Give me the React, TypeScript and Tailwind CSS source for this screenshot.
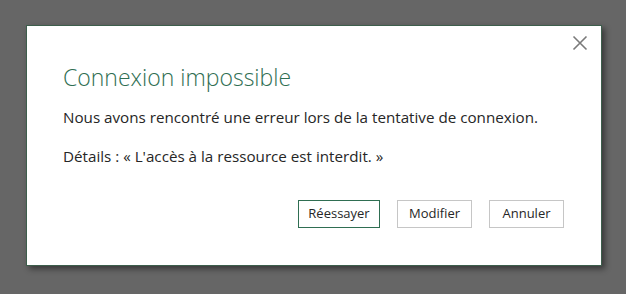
export default function App() {
    return (
        <div className="w-[626px] h-[294px] bg-[#666666] pt-[25px] pl-[26px] font-['Open_Sans',sans-serif]">
            <div className="relative w-[576px] h-[241px] bg-white border border-[#3d5e4c] shadow-[3px_3px_6px_rgba(0,0,0,0.45)] pl-[36px] pt-[36px]">
                <button className="absolute right-[12px] top-[8px] w-[18px] h-[18px] flex items-center justify-center text-[#7a7a7a]">
                    <svg width="16" height="16" viewBox="0 0 16 16" fill="none" stroke="currentColor" strokeWidth="1.6">
                        <path d="M1.5 1.5 L14.5 14.5 M14.5 1.5 L1.5 14.5" />
                    </svg>
                </button>

                <h1 className="text-[23px] font-light leading-[30px] text-[#2f6e52]">Connexion impossible</h1>

                <p className="mt-[15px] text-[15.2px] leading-[20px] text-[#262626]">
                    Nous avons rencontré une erreur lors de la tentative de connexion.
                </p>
                <p className="mt-[19px] text-[15.2px] leading-[20px] text-[#262626]">
                    Détails : « L'accès à la ressource est interdit. »
                </p>

                <div className="flex justify-end gap-[17px] mt-[34px] pr-[37px]">
                    <button className="w-[82px] h-[28px] border border-[#2f6e52] text-[13px] text-[#262626]">Réessayer</button>
                    <button className="w-[75px] h-[28px] border border-[#c6c6c6] text-[13px] text-[#262626]">Modifier</button>
                    <button className="w-[75px] h-[28px] border border-[#c6c6c6] text-[13px] text-[#262626]">Annuler</button>
                </div>
            </div>
        </div>
    );
}
